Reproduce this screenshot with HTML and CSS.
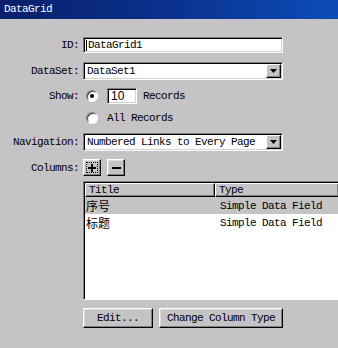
FILE: index.html
```html
<!DOCTYPE html>
<html lang="en">
<head>
  <meta charset="UTF-8" />
  <title>DataGrid</title>
  <link rel="stylesheet" href="styles.css">
</head>
<body>
  <div class="titlebar">DataGrid</div>

  <div class="form">
    <div class="row row-id">
      <div class="label">ID:</div>
      <div class="field wide"><span class="caret"></span>DataGrid1</div>
    </div>

    <div class="row row-dataset">
      <div class="label">DataSet:</div>
      <div class="field wide select">
        <span class="value">DataSet1</span>
        <span class="drop">
          <svg width="7" height="4" viewBox="0 0 7 4"><path d="M0 0h7L3.5 4z" fill="#000"/></svg>
        </span>
      </div>
    </div>

    <div class="row row-show">
      <div class="label">Show:</div>
      <span class="radio checked"></span>
      <div class="field small">10</div>
      <span class="text">Records</span>
    </div>

    <div class="row row-all">
      <div class="label"></div>
      <span class="radio"></span>
      <span class="text-all">All Records</span>
    </div>

    <div class="row row-nav">
      <div class="label">Navigation:</div>
      <div class="field wide select">
        <span class="value">Numbered Links to Every Page</span>
        <span class="drop">
          <svg width="7" height="4" viewBox="0 0 7 4"><path d="M0 0h7L3.5 4z" fill="#000"/></svg>
        </span>
      </div>
    </div>

    <div class="row row-columns">
      <div class="label">Columns:</div>
      <div class="btn icon-btn focused">
        <span class="focus-ring">
          <svg width="8" height="8" viewBox="0 0 8 8"><rect x="0" y="3" width="8" height="2"/><rect x="3" y="0" width="2" height="8"/></svg>
        </span>
      </div>
      <div class="btn icon-btn">
        <svg width="9" height="2" viewBox="0 0 9 2"><rect x="0" y="0" width="9" height="2"/></svg>
      </div>
    </div>

    <div class="grid">
      <div class="grid-head">
        <div class="head-cell col-title">Title</div>
        <div class="head-cell col-type">Type</div>
      </div>
      <div class="grid-row selected">
        <div class="cell col-title cjk">序号</div>
        <div class="cell col-type">Simple Data Field</div>
      </div>
      <div class="grid-row">
        <div class="cell col-title cjk">标题</div>
        <div class="cell col-type">Simple Data Field</div>
      </div>
    </div>

    <div class="actions">
      <div class="btn push edit">Edit...</div>
      <div class="btn push change">Change Column Type</div>
    </div>
  </div>
</body>
</html>
```

FILE: styles.css
```css
body {
  margin: 0;
  width: 338px;
  height: 348px;
  overflow: hidden;
  background: #c6c3c6;
  font-family: "Liberation Mono", monospace;
  font-size: 11px;
  letter-spacing: -0.6px;
  color: #000;
}
.titlebar {
  height: 19px;
  line-height: 19px;
  padding-left: 4px;
  color: #fff;
  background: linear-gradient(to right, #08206b 0%, #0a2f8a 45%, #0c4cb8 100%);
}
.form {
  padding-top: 18px;
}
.row {
  display: flex;
  align-items: center;
}
.label {
  width: 79px;
  margin-right: 4px;
  text-align: right;
  flex-shrink: 0;
}
.field {
  box-sizing: border-box;
  background: #fff;
  border: 1px solid;
  border-color: #808080 #fff #fff #808080;
  box-shadow: inset 1px 1px #000, inset -1px -1px #d6d3ce;
  display: flex;
  align-items: center;
}
.wide {
  width: 200px;
}
.row-id .field {
  height: 16px;
  padding-left: 2px;
}
.caret {
  width: 1px;
  height: 11px;
  background: #000;
  margin-right: 1px;
}
.row-dataset {
  margin-top: 9px;
}
.select {
  height: 18px;
  padding: 0 1px 0 3px;
  justify-content: space-between;
}
.drop {
  width: 15px;
  height: 14px;
  box-sizing: border-box;
  background: #c6c3c6;
  border: 1px solid;
  border-color: #fff #000 #000 #fff;
  box-shadow: inset -1px -1px #808080;
  display: flex;
  align-items: center;
  justify-content: center;
}
.row-show {
  margin-top: 8px;
  height: 16px;
}
.radio {
  width: 12px;
  height: 12px;
  box-sizing: border-box;
  border-radius: 50%;
  background: #fff;
  border: 1px solid;
  border-color: #808080 #fff #fff #808080;
  box-shadow: inset 1px 1px #404040;
  margin-left: 3px;
  margin-right: 9px;
  position: relative;
  flex-shrink: 0;
}
.radio.checked::after {
  content: '';
  position: absolute;
  left: 3px;
  top: 3px;
  width: 4px;
  height: 4px;
  border-radius: 50%;
  background: #000;
}
.small {
  width: 30px;
  height: 16px;
  padding-left: 3px;
  font-family: "Liberation Sans", sans-serif;
  font-size: 12px;
  letter-spacing: 0;
}
.text {
  margin-left: 6px;
}
.row-all {
  margin-top: 6px;
  height: 16px;
}
.row-nav {
  margin-top: 7px;
}
.row-columns {
  margin-top: 8px;
  height: 17px;
}
.btn {
  box-sizing: border-box;
  background: #c6c3c6;
  border: 1px solid;
  border-color: #fff #000 #000 #fff;
  box-shadow: inset -1px -1px #808080, inset 1px 1px #dedbde;
  display: flex;
  align-items: center;
  justify-content: center;
}
.icon-btn {
  width: 18px;
  height: 17px;
  margin-right: 6px;
}
.focus-ring {
  width: 12px;
  height: 11px;
  box-sizing: border-box;
  border: 1px dotted #000;
  display: flex;
  align-items: center;
  justify-content: center;
}
.grid {
  margin: 5px 0 0 83px;
  width: 255px;
  height: 119px;
  box-sizing: border-box;
  background: #fff;
  border: 1px solid;
  border-right: 0;
  border-color: #808080 #fff #fff #808080;
  box-shadow: inset 1px 1px #000;
  padding: 1px 0 0 1px;
  overflow: hidden;
}
.grid-head {
  display: flex;
  height: 14px;
}
.head-cell {
  box-sizing: border-box;
  background: #c6c3c6;
  border: 1px solid;
  border-color: #fff #000 #000 #fff;
  box-shadow: inset -1px -1px #808080;
  padding-left: 3px;
  line-height: 12px;
}
.col-title {
  width: 130px;
  flex-shrink: 0;
}
.col-type {
  flex: 1;
  white-space: nowrap;
}
.head-cell.col-type {
  border-right: 0;
}
.grid-row {
  display: flex;
  height: 17px;
  align-items: center;
}
.grid-row.selected {
  background: #c6c3c6;
}
.cell {
  padding-left: 4px;
}
.cjk {
  padding-left: 1px;
  font-family: "Noto Sans CJK SC", sans-serif;
  font-size: 12px;
  letter-spacing: 0;
}
.actions {
  display: flex;
  gap: 6px;
  margin: 8px 0 0 83px;
}
.push {
  height: 20px;
}
.edit {
  width: 70px;
}
.change {
  width: 124px;
}
```
